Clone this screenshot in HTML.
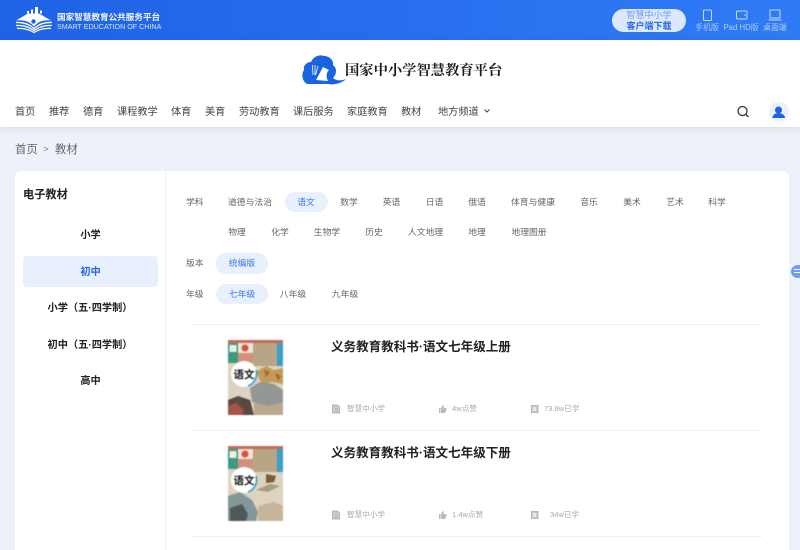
<!DOCTYPE html>
<html lang="zh"><head><meta charset="utf-8">
<style>
*{box-sizing:border-box;margin:0;padding:0}
html,body{width:800px;height:550px;overflow:hidden;background:#edf1fa}
body{position:relative;font-family:"Liberation Sans","Noto Sans CJK SC",sans-serif;color:#333}
.t{position:absolute;white-space:nowrap;line-height:14px}
.c{transform:translateX(-50%);text-align:center}
#top{position:absolute;left:0;top:0;width:800px;height:40px;background:linear-gradient(90deg,#1f62e6,#2f7bf6)}
#hdr{position:absolute;left:0;top:40px;width:800px;height:87px;background:#fff;box-shadow:0 1px 7px rgba(60,80,120,.16)}
#card{position:absolute;left:15px;top:171px;width:774px;height:400px;background:#fff;border-radius:6px}
.nav{font-size:10.2px;top:106px;color:#444}
.tag{font-size:8.8px;color:#666}
.pill{position:absolute;background:#e8effd;border-radius:10px}
.blue{color:#3a78ef}
.side{font-size:10.2px;font-weight:700;color:#222}
.meta{font-size:7.6px;color:#a8a8a8}
.hr{position:absolute;left:192px;width:570px;height:1px;background:#f0f0f0}
.tt{font-size:12.55px;font-weight:700;color:#222;left:331px}
.dl{font-size:7.8px;color:rgba(255,255,255,.62)}
.cv{position:absolute;filter:blur(.5px)}
</style></head><body>
<div id="top"></div>
<svg style="position:absolute;left:14px;top:6px" width="40" height="28" viewBox="0 0 40 28" fill="#fff">
<path d="M2 14.500L14 7.500H25L37 14.500C30 13.500 24 15.500 20 20.500C16 15.500 9 13.500 2 14.500Z"/>
<path d="M13 7.500V5H15V7.500H17V3.500H19V7.500H21V1H24V7.500H26V4.500H28V7.500Z"/>
<circle cx="19.500" cy="15.500" r="2.200" fill="#1f62e6"/>
<g fill="none" stroke="#fff" stroke-width="1.300">
<path d="M2 16.500C9 16 15 18 20 22.500C25 18 31 16 38 16.500"/>
<path d="M2 19.500C9 19 15 21 20 24.500C25 21 31 19 38 19.500"/>
<path d="M3 22.500C9 22 15 23.500 20 26.500C25 23.500 31 22 37 22.500"/>
</g>
</svg>
<div class="t" style="left:57px;top:10px;font-size:8.6px;font-weight:700;color:#f2f6ff;line-height:14px">国家智慧教育公共服务平台</div>
<div class="t" style="left:57px;top:20px;font-size:7.15px;color:#d6e4ff">SMART EDUCATION OF CHINA</div>
<div style="position:absolute;left:612px;top:9px;width:74px;height:23px;border-radius:12px;background:#dbe8fd"></div>
<div class="t c" style="left:649px;top:9px;font-size:9px;color:#6e9cf0;line-height:12px">智慧中小学</div>
<div class="t c" style="left:649px;top:20px;font-size:9px;font-weight:700;color:#2a6ae6;line-height:12px">客户端下载</div>
<svg style="position:absolute;left:702px;top:9px" width="80" height="13" fill="none" stroke="#c5d9fb" stroke-width="1">
<rect x="1.500" y="1" width="8" height="10.500" rx="1"/>
<rect x="34.500" y="2" width="10.500" height="8" rx="1"/><path d="M43 5v2"/>
<rect x="68" y="1" width="10" height="8"/><path d="M66.500 11h13"/>
</svg>
<div class="t c dl" style="left:707px;top:21px">手机版</div>
<div class="t c dl" style="left:741px;top:21px">Pad HD版</div>
<div class="t c dl" style="left:775px;top:21px">桌面端</div>

<div id="hdr"></div>
<svg style="position:absolute;left:301px;top:54px" width="46" height="32" viewBox="0 0 46 32">
<path d="M6 30C1 27 0 20 3 16C2 11 6 8 10 8C12 3 18 0 23 2C28 2 33 6 32 11C36 14 36 20 32 24C36 27 40 27 45 25C40 30 32 31 27 30Z" fill="#1b64e0"/>
<path d="M15 26L22 13L28 16C25 19 25 23 27 27Z" fill="#fff"/>
<path d="M11.500 11L12 21M14 11L14 21M17 12L14.500 21" stroke="#fff" stroke-width=".8" fill="none"/>
</svg>
<div class="t" style="left:345px;top:62px;font-family:'Liberation Serif','Noto Serif CJK SC',serif;font-size:14.3px;font-weight:700;color:#1c1c1c;line-height:18px">国家中小学智慧教育平台</div>

<div class="t nav" style="left:15px">首页</div>
<div class="t nav" style="left:49px">推荐</div>
<div class="t nav" style="left:83px">德育</div>
<div class="t nav" style="left:117px">课程教学</div>
<div class="t nav" style="left:171px">体育</div>
<div class="t nav" style="left:205px">美育</div>
<div class="t nav" style="left:239px">劳动教育</div>
<div class="t nav" style="left:293px">课后服务</div>
<div class="t nav" style="left:347px">家庭教育</div>
<div class="t nav" style="left:401px">教材</div>
<div class="t nav" style="left:438px">地方频道</div>
<svg style="position:absolute;left:483px;top:108px" width="8" height="7" fill="none" stroke="#444" stroke-width="1"><path d="M1.500 1.500L4 4L6.500 1.500"/></svg>
<svg style="position:absolute;left:736px;top:105px" width="14" height="14" fill="none" stroke="#333" stroke-width="1.300"><circle cx="6.500" cy="6" r="4.500"/><path d="M10 9.500L12.500 12"/></svg>
<div style="position:absolute;left:769px;top:102px;width:20px;height:20px;border-radius:50%;background:#eaf1fd"></div>
<svg style="position:absolute;left:771px;top:104px" width="16" height="16" fill="#1f62e6"><circle cx="7.500" cy="6" r="3.500"/><path d="M1.500 14c0-3 2.500-5 6-5s6.500 2 6.500 5z"/></svg>

<div class="t" style="left:15px;top:143px;font-size:11.4px;color:#666">首页</div>
<div class="t" style="left:43px;top:143px;font-size:9.5px;color:#777">&gt;</div>
<div class="t" style="left:55px;top:143px;font-size:11.4px;color:#666">教材</div>

<div id="card"></div>
<div style="position:absolute;left:165px;top:171px;width:1px;height:379px;background:#f1f1f1"></div>

<div class="t" style="left:23px;top:188px;font-size:11.2px;font-weight:700;color:#222">电子教材</div>
<div style="position:absolute;left:23px;top:256px;width:135px;height:31px;background:#e8effd;border-radius:4px"></div>
<div class="t c side" style="left:90.500px;top:229px">小学</div>
<div class="t c side" style="left:90.500px;top:266px;color:#2367e6">初中</div>
<div class="t c side" style="left:90px;top:302px">小学（五·四学制）</div>
<div class="t c side" style="left:90px;top:339px">初中（五·四学制）</div>
<div class="t c side" style="left:90.500px;top:375px">高中</div>

<div class="pill" style="left:285px;top:192px;width:43px;height:20px"></div>
<div class="pill" style="left:216px;top:253px;width:52px;height:21px"></div>
<div class="pill" style="left:216px;top:284px;width:52px;height:20px"></div>

<div class="t tag" style="left:186px;top:195px">学科</div>
<div class="t c tag" style="left:250px;top:195px">道德与法治</div>
<div class="t c tag blue" style="left:306px;top:195px">语文</div>
<div class="t c tag" style="left:349px;top:195px">数学</div>
<div class="t c tag" style="left:391.500px;top:195px">英语</div>
<div class="t c tag" style="left:434.500px;top:195px">日语</div>
<div class="t c tag" style="left:477px;top:195px">俄语</div>
<div class="t c tag" style="left:533px;top:195px">体育与健康</div>
<div class="t c tag" style="left:589px;top:195px">音乐</div>
<div class="t c tag" style="left:632px;top:195px">美术</div>
<div class="t c tag" style="left:675px;top:195px">艺术</div>
<div class="t c tag" style="left:717px;top:195px">科学</div>

<div class="t c tag" style="left:237px;top:225px">物理</div>
<div class="t c tag" style="left:280px;top:225px">化学</div>
<div class="t c tag" style="left:327px;top:225px">生物学</div>
<div class="t c tag" style="left:374px;top:225px">历史</div>
<div class="t c tag" style="left:425.500px;top:225px">人文地理</div>
<div class="t c tag" style="left:477px;top:225px">地理</div>
<div class="t c tag" style="left:529px;top:225px">地理图册</div>

<div class="t tag" style="left:186px;top:256px">版本</div>
<div class="t c tag blue" style="left:242px;top:256px">统编版</div>
<div class="t tag" style="left:186px;top:287px">年级</div>
<div class="t c tag blue" style="left:242px;top:287px">七年级</div>
<div class="t c tag" style="left:293px;top:287px">八年级</div>
<div class="t c tag" style="left:345px;top:287px">九年级</div>

<div class="hr" style="top:324px"></div>
<div class="hr" style="top:430px"></div>
<div class="hr" style="top:536px"></div>

<svg class="cv" style="left:228px;top:340px" width="55" height="75" viewBox="0 0 55 75">
<rect width="55" height="75" rx="2" fill="#dcd3c1"/>
<rect width="55" height="3" fill="#c86a58"/>
<rect y="3" width="25" height="20" fill="#d4907e"/>
<rect y="3" width="10" height="20" fill="#3d9a80"/>
<rect x="1.500" y="5" width="7" height="7" fill="#e8f0e0"/>
<rect x="10" y="3" width="15" height="10" fill="#efe4da"/>
<circle cx="17" cy="8" r="3.500" fill="#d4553e"/>
<rect x="25" y="3" width="24" height="23" fill="#b8a586"/>
<rect x="49" y="3" width="6" height="23" fill="#3aa0c8"/>
<path d="M28 32L38 26L46 30L55 28L55 44L44 42L34 44Z" fill="#c39a58"/>
<path d="M22 48L32 42L46 44L55 50L55 62L40 68L24 62Z" fill="#939896"/>
<path d="M36 30L42 32L38 37ZM47 33L53 36L50 41Z" fill="#a66a2c"/>
<path d="M0 60L10 56L22 60L26 75L0 75Z" fill="#5a4a3e"/>
<path d="M26 62L40 66L55 62L55 75L26 75Z" fill="#b9a88e"/>
<path d="M0 66L8 63L16 70L14 75L0 75Z" fill="#a55545"/>
<circle cx="16" cy="34" r="13" fill="#fff"/><path d="M28 30A13 13 0 0 1 20 46" fill="none" stroke="#1c9ad0" stroke-width="1.500"/>
<text x="16" y="38" font-size="10.500" font-weight="700" text-anchor="middle" fill="#111" font-family="Liberation Sans,Noto Sans CJK SC,sans-serif">语文</text>
</svg>
<svg class="cv" style="left:228px;top:446px" width="55" height="75" viewBox="0 0 55 75">
<rect width="55" height="75" rx="2" fill="#ddd3bf"/>
<rect width="55" height="3" fill="#c86a58"/>
<rect y="3" width="25" height="20" fill="#d4907e"/>
<rect y="3" width="10" height="20" fill="#3d9a80"/>
<rect x="1.500" y="5" width="7" height="7" fill="#e8f0e0"/>
<rect x="10" y="3" width="15" height="10" fill="#efe4da"/>
<circle cx="17" cy="8" r="3.500" fill="#d4553e"/>
<rect x="25" y="3" width="24" height="23" fill="#b8a586"/>
<rect x="49" y="3" width="6" height="23" fill="#3aa0c8"/>
<path d="M38 28L48 30L46 36L38 37Z" fill="#7a5c38"/>
<path d="M28 44L42 38L52 40L40 46Z" fill="#a99a80"/>
<path d="M0 50L12 46L24 54L30 66L28 75L0 75Z" fill="#83989a"/>
<path d="M2 62L14 58L20 68L18 75L2 75Z" fill="#4e5a58"/>
<path d="M30 60L46 56L55 60L55 75L30 75Z" fill="#c6b59a"/>
<circle cx="16" cy="34" r="13" fill="#fff"/><path d="M28 30A13 13 0 0 1 20 46" fill="none" stroke="#1c9ad0" stroke-width="1.500"/>
<text x="16" y="38" font-size="10.500" font-weight="700" text-anchor="middle" fill="#111" font-family="Liberation Sans,Noto Sans CJK SC,sans-serif">语文</text>
</svg>

<div class="t tt" style="top:339px;line-height:16px">义务教育教科书·语文七年级上册</div>
<div class="t tt" style="top:445px;line-height:16px">义务教育教科书·语文七年级下册</div>

<svg style="position:absolute;left:332px;top:404px" width="250" height="10" fill="#ccc" stroke="#b5b5b5" stroke-width="1"><path d="M.5 1h5l2 2v6h-7zM3 5h3M3 7h3"/><path fill="#bbb" stroke="none" d="M107 4h1.500v5H107zM109 4l2-3 1 .5-.5 2.500h3v2l-1.500 3h-4z"/><rect x="199.500" y="1.500" width="6.500" height="7"/><path d="M201 4h3M201 6h3" stroke="#fff"/></svg>
<svg style="position:absolute;left:332px;top:510px" width="250" height="10" fill="#ccc" stroke="#b5b5b5" stroke-width="1"><path d="M.5 1h5l2 2v6h-7zM3 5h3M3 7h3"/><path fill="#bbb" stroke="none" d="M107 4h1.500v5H107zM109 4l2-3 1 .5-.5 2.500h3v2l-1.500 3h-4z"/><rect x="199.500" y="1.500" width="6.500" height="7"/><path d="M201 4h3M201 6h3" stroke="#fff"/></svg>
<div class="t meta" style="left:347px;top:402px">智慧中小学</div>
<div class="t meta" style="left:452px;top:402px">4w点赞</div>
<div class="t meta" style="left:544px;top:402px">73.9w已学</div>
<div class="t meta" style="left:347px;top:508px">智慧中小学</div>
<div class="t meta" style="left:452px;top:508px">1.4w点赞</div>
<div class="t meta" style="left:550px;top:508px">34w已学</div>

<div style="position:absolute;left:791px;top:265px;width:14px;height:13px;border-radius:50%;background:#6f9bf0"></div>
<div style="position:absolute;left:794px;top:269px;width:6px;height:1px;background:#fff"></div>
<div style="position:absolute;left:794px;top:272px;width:6px;height:1px;background:#fff"></div>
</body></html>
